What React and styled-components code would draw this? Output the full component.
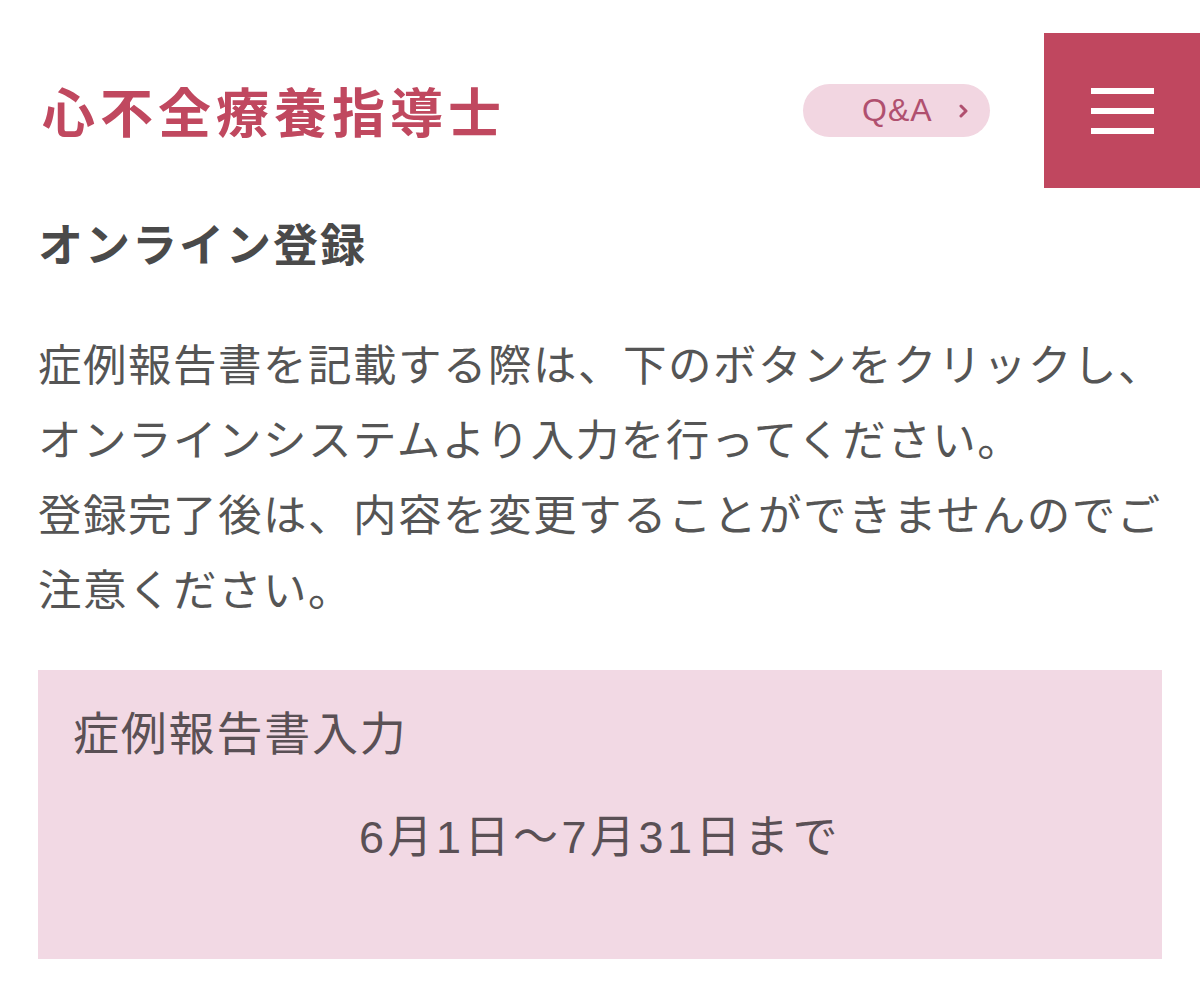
import React from "react";
import styled, { createGlobalStyle } from "styled-components";

const Global = createGlobalStyle`
  html, body { margin: 0; padding: 0; background: #fff; }
  body { font-family: "Noto Sans CJK JP", "Noto Sans", sans-serif; }
`;

const Page = styled.div`
  width: 1200px;
  overflow: hidden;
`;

const Header = styled.header`
  display: flex;
  align-items: center;
  margin-top: 33px;
  height: 155px;
  padding-left: 42px;
`;

const Logo = styled.div`
  font-family: "Noto Sans CJK JP", sans-serif;
  font-weight: 700;
  font-size: 53px;
  letter-spacing: 5px;
  color: #c0485f;
  line-height: 1;
  flex: 1;
`;

const Pill = styled.a`
  display: flex;
  align-items: center;
  height: 53px;
  width: 187px;
  box-sizing: border-box;
  padding-left: 59px;
  gap: 26px;
  border-radius: 27px;
  background: #f2d6e1;
  color: #b0506f;
  font-family: "Liberation Sans", Arial, sans-serif;
  font-size: 32px;
  letter-spacing: 1px;
  text-decoration: none;
  margin-right: 54px;
`;

const MenuButton = styled.button`
  width: 156px;
  height: 155px;
  border: none;
  background: #c0475f;
  display: flex;
  flex-direction: column;
  align-items: center;
  justify-content: center;
  gap: 14px;
  padding: 0;
`;

const Bar = styled.span`
  display: block;
  width: 63px;
  height: 6px;
  background: #fff;
`;

const Main = styled.main`
  padding: 0 38px;
`;

const Heading = styled.h2`
  margin: 25px 0 0;
  font-size: 45px;
  line-height: 60px;
  font-weight: 700;
  letter-spacing: 2px;
  color: #4a4a4a;
`;

const Body = styled.div`
  margin-top: 52px;
  font-size: 43.5px;
  line-height: 75px;
  letter-spacing: 1.5px;
  color: #555;
  font-weight: 400;
`;

const Line = styled.div`
  white-space: nowrap;
`;

const Box = styled.section`
  margin-top: 45px;
  background: #f2d9e4;
  padding: 30px 35px 91px;
  color: #5a5055;
`;

const BoxTitle = styled.div`
  font-size: 46px;
  line-height: 60px;
  letter-spacing: 1.8px;
`;

const Period = styled.div`
  margin-top: 48px;
  text-align: center;
  font-size: 45px;
  line-height: 60px;
  letter-spacing: 3.5px;
  font-family: "Liberation Sans", "Noto Sans CJK JP", sans-serif;
`;

const Chevron = () => (
  <svg width="9" height="14" viewBox="0 0 9 14">
    <path d="M2 2 L7 7 L2 12" fill="none" stroke="#b0506f" strokeWidth="3" strokeLinecap="round" strokeLinejoin="round" />
  </svg>
);

export default function App() {
  return (
    <Page>
      <Global />
      <Header>
        <Logo>心不全療養指導士</Logo>
        <Pill href="#">
          <span>Q&amp;A</span>
          <Chevron />
        </Pill>
        <MenuButton aria-label="menu">
          <Bar />
          <Bar />
          <Bar />
        </MenuButton>
      </Header>
      <Main>
        <Heading>オンライン登録</Heading>
        <Body>
          <Line>症例報告書を記載する際は、下のボタンをクリックし、</Line>
          <Line>オンラインシステムより入力を行ってください。</Line>
          <Line>登録完了後は、内容を変更することができませんのでご</Line>
          <Line>注意ください。</Line>
        </Body>
        <Box>
          <BoxTitle>症例報告書入力</BoxTitle>
          <Period>6月1日〜7月31日まで</Period>
        </Box>
      </Main>
    </Page>
  );
}
